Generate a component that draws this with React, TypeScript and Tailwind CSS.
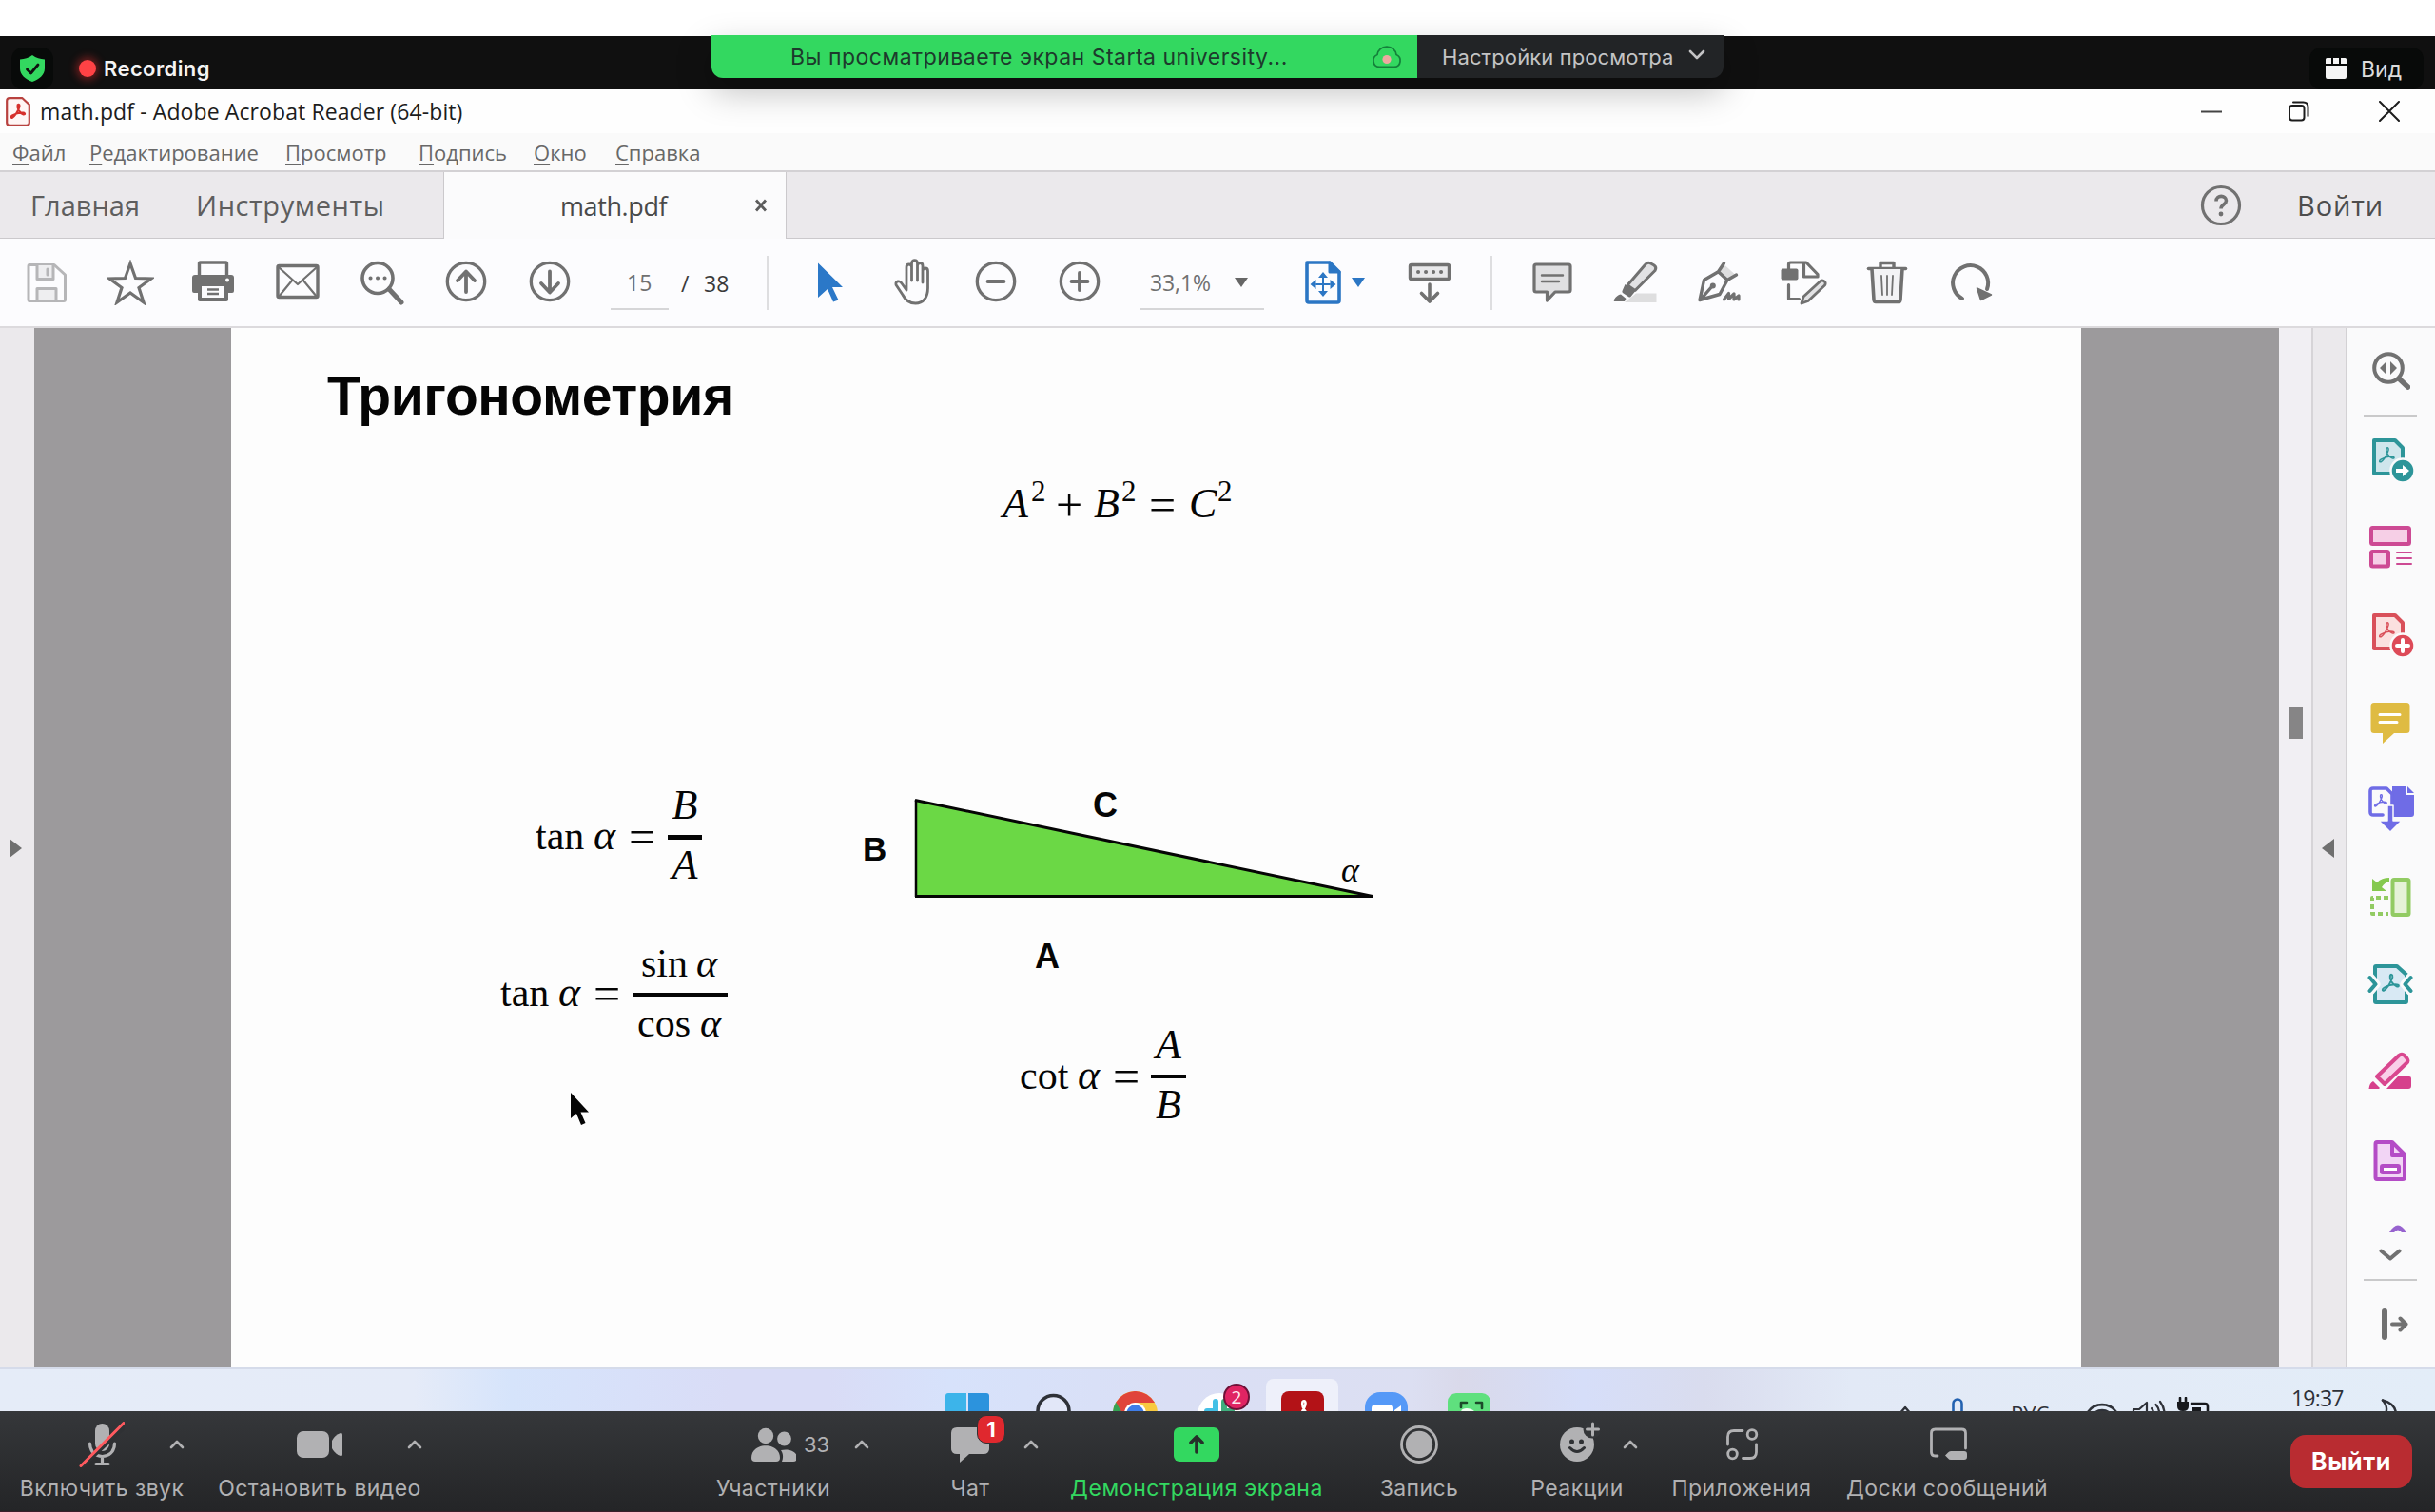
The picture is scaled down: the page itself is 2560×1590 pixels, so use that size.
import React from "react";

type P = { children?: React.ReactNode; className?: string };

function Ico({ children, className = "size-12", vb = "0 0 48 48" }: P & { vb?: string }) {
  return (
    <svg viewBox={vb} className={`block shrink-0 ${className}`} fill="none" strokeLinecap="round" strokeLinejoin="round">
      {children}
    </svg>
  );
}

const G = "#717171";

function Cell({ children, className = "w-[88px]" }: P) {
  return <div className={`flex h-full shrink-0 items-center justify-center ${className}`}>{children}</div>;
}

function ZoomHeader() {
  return (
    <div className="relative flex h-14 items-end justify-between bg-[#101010]">
      <div className="flex items-center">
        <div className="ml-3 flex h-11 w-11 items-center justify-center rounded-xl bg-[#080a09]">
          <Ico className="h-7 w-[26px]" vb="0 0 26 28">
            <path d="M13 0C17 3 21 4 26 4.500V14c0 7-6 11.500-13 14C6 25.500 0 21 0 14V4.500C5 4 9 3 13 0Z" fill="#33d860" />
            <path d="m7.500 15 4 4 7.500-9" stroke="#101010" strokeWidth="2.800" />
          </Ico>
        </div>
        <div className="ml-[27px] size-[18px] rounded-full bg-[#ff4245] shadow-[0_0_8px_3px_rgba(255,50,50,0.4)]" />
        <div className="ml-[8px] text-[22px] font-semibold leading-none tracking-[0.4px] text-[#f4f4f4]">Recording</div>
      </div>
      <div className="mr-3 flex h-11 w-[120px] items-center rounded-xl bg-[#080a09]">
        <Ico className="ml-[17px] h-[22px] w-[22px]" vb="0 0 22 22">
          <path d="M0 1.500Q0 0 1.500 0H6v6H0ZM8 0h6v6H8ZM16 0h4.500Q22 0 22 1.500V6h-6ZM0 8h22v12q0 2-2 2H2q-2 0-2-2Z" fill="#f5f5f5" />
        </Ico>
        <div className="ml-[15px] pt-0.5 text-[23px] leading-none text-[#dcdcdc]">Вид</div>
      </div>
      <div className="absolute -top-px left-[748px] z-10 flex h-[45px] w-[1064px] overflow-visible rounded-b-xl shadow-[0_14px_36px_rgba(0,0,0,0.25)]">
        <div className="flex w-[742px] items-center rounded-bl-xl bg-[#33d860]">
          <div className="ml-[83px] w-[611px] whitespace-nowrap pt-px text-[23px] leading-none tracking-[0.5px] text-[#1d3a2c]">
            Вы просматриваете экран Starta university...
          </div>
          <Ico className="h-6 w-8" vb="0 0 32 24">
            <path d="M8 22.500a6.800 6.800 0 0 1-2-13C6.500 5 10.500 1.200 16 1.200S25.500 5 26 9.500a6.800 6.800 0 0 1-2 13Z" stroke="#14803a" strokeWidth="1.800" />
            <circle cx="16" cy="14.500" r="4.600" fill="#eda9a0" />
          </Ico>
        </div>
        <div className="flex w-[322px] items-center rounded-br-xl bg-[#222426]">
          <div className="ml-[26px] w-[259px] whitespace-nowrap pt-px text-[22px] leading-none tracking-[0.1px] text-[#c4c4c5]">Настройки просмотра</div>
          <Ico className="mb-1 h-3 w-[18px]" vb="0 0 18 12">
            <path d="m2 2 7 7 7-7" stroke="#c4c4c5" strokeWidth="2.600" />
          </Ico>
        </div>
      </div>
    </div>
  );
}

function Swoosh({ c, w = 2 }: { c: string; w?: number }) {
  return (
    <path
      d="M9.500 1.500c2-2 3.500 1 1.500 5C9 11 5.500 17 2.500 18.500.500 19.200 0 17 2.500 15.500 7 13 13 11.500 17 12c3 .5 2 3-.5 2C12.500 12.500 8 6 9.500 1.500Z"
      stroke={c}
      strokeWidth={w}
    />
  );
}

function TitleBar() {
  return (
    <div className="flex h-[46px] items-center bg-[#fefefe]">
      <Ico className="ml-[6px] h-[31px] w-[26px]" vb="0 0 26 31">
        <path d="M4 1.200h13.500L24.800 8v19q0 2.800-2.800 2.800H4q-2.800 0-2.800-2.800V4Q1.200 1.200 4 1.200Z" stroke="#b8423f" strokeWidth="2.200" fill="#fff6f5" />
        <g transform="translate(5 7) scale(.8)">
          <Swoosh c="#d6302c" w={2.6} />
        </g>
      </Ico>
      <div className="ml-[10px] whitespace-nowrap text-[23px] leading-none tracking-[0.1px] text-[#1c1c1c]">
        math.pdf - Adobe Acrobat Reader (64-bit)
      </div>
      <Ico className="ml-auto mr-[70px] h-[3px] w-[22px]" vb="0 0 22 3">
        <path d="M0 1.500h22" stroke="#444" strokeWidth="2" />
      </Ico>
      <Ico className="mr-[73px] h-[22px] w-[22px]" vb="0 0 22 22">
        <rect x="1" y="5" width="15.500" height="15.500" rx="3" stroke="#1c1c1c" strokeWidth="2" />
        <path d="M5 1.500h10.500q5 0 5 5V16" stroke="#1c1c1c" strokeWidth="2" />
      </Ico>
      <Ico className="mr-[37px] h-[22px] w-[22px]" vb="0 0 22 22">
        <path d="m1 1 20 20M21 1 1 21" stroke="#1c1c1c" strokeWidth="2" />
      </Ico>
    </div>
  );
}

function MenuItem({ text, className }: { text: string; className: string }) {
  return (
    <div className={`whitespace-nowrap ${className}`}>
      <span className="underline decoration-[1.500px] underline-offset-[3px]">{text[0]}</span>
      {text.slice(1)}
    </div>
  );
}

function MenuBar() {
  return (
    <div className="flex h-[39px] items-center bg-[#fafafa] pl-[13px] text-[22px] leading-none text-[#686868]">
      <MenuItem text="Файл" className="w-[81px]" />
      <MenuItem text="Редактирование" className="w-[206px]" />
      <MenuItem text="Просмотр" className="w-[140px]" />
      <MenuItem text="Подпись" className="w-[121px]" />
      <MenuItem text="Окно" className="w-[86px]" />
      <MenuItem text="Справка" className="w-[100px]" />
    </div>
  );
}

function TabBar() {
  return (
    <div className="flex h-[72px] items-stretch border-t-2 border-[#d3d1d4] bg-[#ebe9ec] text-[29px] leading-none text-[#5e5e5e]">
      <div className="flex w-[467px] items-center border-b border-r border-[#cbc9cc] pl-[32px]">
        <div className="w-[174px]">Главная</div>
        <div className="tracking-[0.600px]">Инструменты</div>
      </div>
      <div className="flex w-[359px] items-center bg-[#fbfbfc] pl-[122px]">
        <div className="w-[204px] text-[27px] tracking-[-0.4px] text-[#4a4a4a]">math.pdf</div>
        <Ico className="h-[14px] w-[14px]" vb="0 0 14 14">
          <path d="m2 1.500 10 11M12 1.500l-10 11" stroke="#5c5c5c" strokeWidth="2.800" strokeLinecap="butt" />
        </Ico>
      </div>
      <div className="flex flex-1 items-center justify-end border-b border-l border-[#cbc9cc]">
        <Ico className="mr-[58px] h-11 w-11" vb="0 0 44 44">
          <circle cx="22" cy="22" r="19.500" stroke={G} strokeWidth="3.200" />
          <path d="M17 17.500c0-7 10.500-6.500 10.500-.5 0 4-5.500 4-5.500 8.500" stroke={G} strokeWidth="3.600" strokeLinecap="butt" />
          <circle cx="22" cy="31" r="2.400" fill={G} />
        </Ico>
        <div className="w-[145px] font-medium tracking-[0.9px] text-[#4d4d4d]">Войти</div>
      </div>
    </div>
  );
}

function ToolBar() {
  return (
    <div className="flex h-[94px] items-center border-b-2 border-[#dcdadd] bg-[#fcfcfe] pl-[5px] text-[23px] leading-none">
      <Cell>
        <Ico>
          <path d="M6 5.500h26L43.500 16v26q0 1.500-1.500 1.500H6Q5 43.500 5 42V7q0-1.500 1-1.500Z" stroke="#b6b6b8" strokeWidth="3" />
          <path d="M14 6v14.500h17V6M14 43V30.500h20V43" stroke="#b6b6b8" strokeWidth="3" fill="#eeeef0" />
          <path d="M25 10v6" stroke="#b6b6b8" strokeWidth="3" />
        </Ico>
      </Cell>
      <Cell>
        <Ico className="h-12 w-[50px]" vb="0 0 50 48">
          <path d="m25 4 5.500 15.500L47 20 34 29.500l5 15.500-14-10-14 10 5-15.500L3 20l16.500-.5Z" stroke={G} strokeWidth="3.200" strokeLinejoin="miter" />
        </Ico>
      </Cell>
      <Cell className="w-[86px]">
        <Ico>
          <path d="M9.500 17V4q0-1 1-1h27q1 0 1 1v13" stroke={G} strokeWidth="3.400" />
          <path d="M5 16h38q3 0 3 3v14q0 2-2 2h-4v7q0 2-2 2H10q-2 0-2-2v-7H4q-2 0-2-2V19q0-3 3-3Z" fill={G} />
          <circle cx="39" cy="21.500" r="2" fill="#fff" />
          <path d="M12 28h24v12H12Z" fill="#fcfcfe" />
          <path d="M18 31.500h12M18 36h12" stroke={G} strokeWidth="2.400" strokeLinecap="butt" />
        </Ico>
      </Cell>
      <Cell className="w-[91px]">
        <Ico>
          <rect x="3" y="6.500" width="42" height="33" rx="1.500" stroke={G} strokeWidth="3.400" />
          <path d="m4 8 20 18L44 8M4 39l14-17M44 39 30 22" stroke={G} strokeWidth="2.200" />
        </Ico>
      </Cell>
      <Cell>
        <Ico>
          <circle cx="19" cy="19.500" r="16" stroke={G} strokeWidth="3.600" />
          <path d="m31 31 13 14" stroke={G} strokeWidth="5" />
          <path d="M11.500 19.500h.1M19 19.500h.1M26.500 19.500h.1" stroke={G} strokeWidth="4" />
        </Ico>
      </Cell>
      <Cell>
        <Ico>
          <circle cx="24" cy="23" r="19.700" stroke={G} strokeWidth="3.300" />
          <path d="M24 34V14M15 22l9-9.500 9 9.500" stroke={G} strokeWidth="3.800" />
        </Ico>
      </Cell>
      <Cell>
        <Ico>
          <circle cx="24" cy="23" r="19.700" stroke={G} strokeWidth="3.300" />
          <path d="M24 12.500v20M15 25l9 9.500 9-9.500" stroke={G} strokeWidth="3.800" />
        </Ico>
      </Cell>
      <div className="ml-[20px] flex h-[57px] w-[61px] items-center border-b-2 border-[#d6d6d8] pl-[17px] pt-0.5 text-[#707070]">15</div>
      <div className="ml-[13px] w-6 pt-0.5 text-[#3a3a3a]">/</div>
      <div className="w-[66px] pt-0.5 text-[#3a3a3a]">38</div>
      <div className="mr-[21px] h-[57px] w-0.5 bg-[#dedee0]" />
      <Cell>
        <Ico>
          <path d="m11 3.500 26 25.500H26l6.500 13.500-5.500 2-6-13.500-10 9Z" fill="#2b78c8" />
        </Ico>
      </Cell>
      <Cell className="w-[86px]">
        <Ico className="h-[52px] w-[50px]" vb="0 0 50 52">
          <path
            d="M15 30V10c0-4 5.500-4 5.500 0V24 6c0-4.500 6-4.500 6 0v18V8.500c0-4 5.500-4 5.500 0V26 14c0-4 5.500-4 5.500 0v18c0 10-5 16-13 16-7 0-11-4-13.500-9L4 28.500c-1-4 4-5 6-1.500l5 7Z"
            transform="translate(3 0)"
            stroke={G}
            strokeWidth="2.800"
          />
        </Ico>
      </Cell>
      <Cell>
        <Ico>
          <circle cx="24" cy="23" r="19.700" stroke={G} strokeWidth="3.300" />
          <path d="M15.500 23h17" stroke={G} strokeWidth="3.800" />
        </Ico>
      </Cell>
      <Cell>
        <Ico>
          <circle cx="24" cy="23" r="19.700" stroke={G} strokeWidth="3.300" />
          <path d="M15.500 23h17M24 14v18" stroke={G} strokeWidth="3.800" />
        </Ico>
      </Cell>
      <div className="ml-[20px] flex h-[57px] w-[130px] items-center border-b-2 border-[#d6d6d8] pl-[10px] pt-0.5 tracking-[-0.1px] text-[#707070]">
        <div className="w-[89px]">33,1%</div>
        <Ico className="h-[10px] w-[14px]" vb="0 0 14 10">
          <path d="M0 0h14L7 10Z" fill="#666" />
        </Ico>
      </div>
      <Ico className="ml-[38px] h-12 w-12">
        <path d="M7 3h24l10 10v30q0 2-2 2H9q-2 0-2-2V5q0-2 2-2Z" stroke="#2b76c4" strokeWidth="3.600" />
        <path d="M31 3v10h10" stroke="#2b76c4" strokeWidth="3" fill="#2b76c4" />
        <path d="M24 19v14M17 26h14" stroke="#2b76c4" strokeWidth="2" />
        <path d="m24 13 5 6H19ZM24 39l5-6H19ZM10.500 26l6-5v10ZM37.500 26l-6-5v10Z" fill="#2b76c4" />
      </Ico>
      <Ico className="ml-[6px] h-[10px] w-[14px]" vb="0 0 14 10">
        <path d="M0 0h14L7 10Z" fill="#2b76c4" />
      </Ico>
      <Ico className="ml-[44px] h-12 w-12">
        <rect x="3.500" y="5.500" width="41" height="15" rx="1.500" stroke={G} strokeWidth="3.400" fill="#e8e8ea" />
        <path d="M12 13h.1M20 13h.1M28 13h.1M36 13h.1" stroke={G} strokeWidth="4" />
        <path d="M24 26v17M15.500 35.500 24 44l8.500-8.500" stroke={G} strokeWidth="3.600" />
      </Ico>
      <div className="ml-[40px] mr-[19px] h-[57px] w-0.5 bg-[#dedee0]" />
      <Cell>
        <Ico>
          <path d="M7 5h34q2 0 2 2v25q0 2-2 2H27l-8.500 9V34H7q-2 0-2-2V7q0-2 2-2Z" stroke={G} strokeWidth="3.200" fill="#e0e0e2" />
          <path d="M13 16.500h22M13 23h18" stroke={G} strokeWidth="2.400" />
        </Ico>
      </Cell>
      <Cell>
        <Ico>
          <path d="M12 45 24 35.500H45.500V45Z" fill="#dededf" />
          <path d="M33.500 5.500q2.500-3.500 6-1.500l3.500 2q3 2 1 5.500L23 32.500l-8-5.500Z" stroke={G} strokeWidth="3" fill="#e2e2e4" />
          <path d="m12.500 26 10.500 7.500-4.500 5.500q-1 1-2.500 0l-6-4q-1-1-.5-2ZM8 36.500l5.500 4.500-1.500 3H2Q0 44 1 42q3-5 7-5.500Z" fill={G} />
        </Ico>
      </Cell>
      <Cell>
        <Ico>
          <path d="m28.500 5 12 11-7.500 5-10.500-8.500Z" fill="#dededf" />
          <path d="m28.500 3.700-6 9L7.500 21.500 3 42.500l21-6L32 21.500l9.500-5.500M22.500 12.700 32 21.500M4 42l12.500-14.500" stroke={G} strokeWidth="3.400" />
          <circle cx="16.800" cy="27.500" r="3" fill={G} />
          <path d="m28.500 42 5-6.500v6l5.500-5.500v6l5-4v4" stroke={G} strokeWidth="3.200" />
        </Ico>
      </Cell>
      <Cell>
        <Ico className="h-12 w-[50px]" vb="0 0 50 48">
          <path d="M9.500 11V5q0-2 2-2H28l12 12.500V18H25.500V4M9.500 26.500v15h11" stroke={G} strokeWidth="3.200" />
          <rect x="1.500" y="9.500" width="18" height="12" rx="2" fill={G} />
          <path d="M43 22.500q3-1.500 5 1.500.5 1.500-.5 3L30 43.500l-7 2.500 2-7Z" stroke={G} strokeWidth="2.800" fill="#e2e2e4" />
        </Ico>
      </Cell>
      <Cell>
        <Ico>
          <path d="M17 9V3.500h14V9" stroke={G} strokeWidth="3.400" />
          <path d="M4.500 9.500h39" stroke={G} strokeWidth="3.600" />
          <path d="M8 10 10 42q.2 2.500 2 2.500h24q1.800 0 2-2.500l2-32" stroke={G} strokeWidth="3.600" fill="#f3f3f5" />
          <path d="m18 17 1 20M24 17v20M30 17l-1 20" stroke={G} strokeWidth="1.800" />
        </Ico>
      </Cell>
      <Cell>
        <Ico>
          <path d="M15 41A18.500 18.500 0 1 1 41 31" stroke={G} strokeWidth="4" />
          <path d="m30.500 30 15 7-11 5.500Z" fill={G} stroke={G} strokeWidth="1.500" />
        </Ico>
      </Cell>
    </div>
  );
}

function Lhs({ fn }: { fn: string }) {
  return (
    <>
      <span className="w-[61px] text-[42px] leading-[42px]">{fn}</span>
      <span className="w-[37px] text-[44px] italic leading-[42px]">α</span>
      <span className="relative top-1 w-[41px] text-[50px] leading-[42px]">=</span>
    </>
  );
}

function PdfPage() {
  return (
    <div className="relative w-[1945px] shrink-0 overflow-hidden bg-[#fdfdfd] text-[#050505] [font-family:'Liberation_Serif',serif]">
      <h1 className="absolute left-[101px] top-[43px] whitespace-nowrap text-[57px] font-bold leading-none tracking-[-0.400px] [font-family:'Liberation_Sans',sans-serif]">
        Тригонометрия
      </h1>

      <div className="absolute left-[811px] top-[160px] flex items-baseline text-[44px] leading-[44px]">
        <i className="w-[30px]">A</i>
        <span className="relative -top-[17px] w-[26px] text-[31px]">2</span>
        <span className="relative top-[4px] w-[40px] text-[50px]">+</span>
        <i className="w-[29px]">B</i>
        <span className="relative -top-[17px] w-[29px] text-[31px]">2</span>
        <span className="relative top-[4px] w-[42px] text-[50px]">=</span>
        <i className="w-[30px]">C</i>
        <span className="relative -top-[17px] text-[31px]">2</span>
      </div>

      <div className="absolute left-[320px] top-[480px] flex items-start">
        <div className="mt-[30px] flex items-baseline">
          <Lhs fn="tan" />
        </div>
        <div className="flex w-[36px] flex-col items-center text-[44px] italic leading-[44px]">
          <span>B</span>
          <span className="mb-[5px] mt-[9px] h-[5px] w-full bg-[#050505]" />
          <span>A</span>
        </div>
      </div>

      <div className="absolute left-[283px] top-[647px] flex items-start">
        <div className="mt-[28px] flex items-baseline">
          <Lhs fn="tan" />
        </div>
        <div className="flex w-[100px] flex-col text-[42px] leading-[42px]">
          <span className="flex pl-[9px]">
            <span className="w-[58px]">sin</span>
            <i>α</i>
          </span>
          <span className="mb-[7px] mt-[10px] h-[4px] w-full bg-[#050505]" />
          <span className="flex pl-[5px]">
            <span className="w-[66px]">cos</span>
            <i>α</i>
          </span>
        </div>
      </div>

      <div className="absolute left-[829px] top-[732px] flex items-start">
        <div className="mt-[30px] flex items-baseline">
          <Lhs fn="cot" />
        </div>
        <div className="-ml-px flex w-[37px] flex-col items-center text-[44px] italic leading-[44px]">
          <span>A</span>
          <span className="mb-[6px] mt-[9px] h-[4px] w-full bg-[#050505]" />
          <span>B</span>
        </div>
      </div>

      <svg viewBox="0 0 490 112" className="absolute left-[715px] top-[491px] h-[112px] w-[490px]">
        <path d="M5 5.500V106H485Z" fill="#6bd845" />
        <path d="M5 5v102" stroke="#050505" strokeWidth="2.500" />
        <path d="M4 5.500 485 106.500H4" stroke="#050505" strokeWidth="3" fill="none" />
      </svg>
      <div className="absolute left-[664px] top-[530px] text-[35px] font-bold leading-none [font-family:'Liberation_Sans',sans-serif]">B</div>
      <div className="absolute left-[906px] top-[484px] text-[36px] font-bold leading-none [font-family:'Liberation_Sans',sans-serif]">C</div>
      <div className="absolute left-[845px] top-[643px] text-[36px] font-bold leading-none [font-family:'Liberation_Sans',sans-serif]">A</div>
      <div className="absolute left-[1167px] top-[552px] text-[36px] italic leading-none">α</div>

      <svg viewBox="0 0 22 36" className="absolute left-[356px] top-[803px] h-9 w-[22px]">
        <path d="M1 1v27l6-5 5 12 4.500-2-5-11.500H20Z" fill="#050505" />
      </svg>
    </div>
  );
}

function SideTools() {
  return (
    <div className="flex flex-1 flex-col items-center bg-[#fafafb] pr-0.5">
      <Ico className="ml-0.5 mt-[25px] h-10 w-10" vb="0 0 40 40">
        <circle cx="17" cy="17" r="14.800" stroke={G} strokeWidth="4" />
        <path d="m29 29 8.500 8" stroke={G} strokeWidth="5.500" />
        <path d="M15 10v14l-7-7ZM19 10v14l7-7Z" fill={G} />
      </Ico>
      <div className="mt-[26px] h-0.5 w-14 bg-[#c9c9ca]" />
      <Ico className="ml-[5px] mt-[23px] h-[47px] w-[46px]" vb="0 0 46 47">
        <path d="M3 2h22l8 8v27H3Z" stroke="#2d9599" strokeWidth="4" fill="#cfe6ec" />
        <g transform="translate(8 9) scale(.85)"><Swoosh c="#2d9599" w={1.8} /></g>
        <circle cx="33" cy="34" r="12.500" fill="#2d9599" stroke="#fafafb" strokeWidth="2.500" />
        <path d="M26 32h7v-4l7 6-7 6v-4h-7Z" fill="#fff" />
      </Ico>
      <Ico className="mt-[45px] h-[45px] w-[46px]" vb="0 0 46 45">
        <rect x="3" y="2" width="40" height="17" rx="1.500" stroke="#cd4a94" strokeWidth="4" fill="#f6cfe6" />
        <rect x="3" y="27" width="18" height="15.500" rx="1.500" stroke="#cd4a94" strokeWidth="4" fill="#f6cfe6" />
        <path d="M30 28h15M30 34h15M30 40h15" stroke="#cd4a94" strokeWidth="2" />
      </Ico>
      <Ico className="ml-[5px] mt-[47px] h-[47px] w-[46px]" vb="0 0 46 47">
        <path d="M3 2h22l8 8v27H3Z" stroke="#d9505a" strokeWidth="4" fill="#fbe0df" />
        <g transform="translate(8 9) scale(.85)"><Swoosh c="#d9505a" w={1.8} /></g>
        <circle cx="33" cy="34" r="12.500" fill="#dd4a58" stroke="#fafafb" strokeWidth="2.500" />
        <path d="M33 28v12M27 34h12" stroke="#fff" strokeWidth="4" />
      </Ico>
      <Ico className="mt-[47px] h-[43px] w-[42px]" vb="0 0 42 43">
        <path d="M4 0h34q3.500 0 3.500 3.500v25q0 3.500-3.500 3.500H25L13 43V32H4Q.5 32 .5 28.500v-25Q.5 0 4 0Z" fill="#dfbb42" />
        <path d="M10 12.500h21M10 20.500h18" stroke="#fff" strokeWidth="3" />
      </Ico>
      <Ico className="ml-[1px] mt-[45px] h-12 w-12">
        <path d="M25 0h14v9h9v20q0 3-3 3H25Z" fill="#6f6ce6" />
        <path d="M41 0l7 7h-7Z" fill="#6f6ce6" />
        <path d="M15 30H5q-3 0-3-3V5q0-3 3-3h14l6 6v14" stroke="#6f6ce6" strokeWidth="3.600" fill="#fafafb" />
        <g transform="translate(6 8) scale(.7)"><Swoosh c="#6f6ce6" w={2} /></g>
        <path d="M20 20h6v16h9L23 48 11 36h9Z" fill="#6f6ce6" stroke="#fafafb" strokeWidth="1.500" />
      </Ico>
      <Ico className="mt-[47px] h-[43px] w-[44px]" vb="0 0 44 43">
        <rect x="24.500" y="3" width="17" height="37" rx="1.500" stroke="#92cb63" strokeWidth="4" fill="#e5f2d8" />
        <path d="M20 22H3v17h17" stroke="#92cb63" strokeWidth="4" strokeDasharray="5 3" strokeLinecap="butt" />
        <path d="M3 2v13h15l-5-4q3-5 8-6V1q-8 0-13 5Z" fill="#85c94f" />
      </Ico>
      <Ico className="mt-[49px] h-[42px] w-12" vb="0 0 48 42">
        <path d="M9 2h22l10 9v28q0 1-1 1H9q-1 0-1-1V3q0-1 1-1Z" stroke="#2d9599" strokeWidth="4" fill="#d8e9f4" />
        <path d="m2.500 14 6 7-6 7M45.500 14l-6 7 6 7" stroke="#fafafb" strokeWidth="10" />
        <path d="m2.500 14 6 7-6 7M45.500 14l-6 7 6 7" stroke="#2d9599" strokeWidth="4" />
        <g transform="translate(15 10) scale(.95)"><Swoosh c="#2d9599" w={2} /></g>
      </Ico>
      <Ico className="mt-[50px] h-[41px] w-[46px]" vb="0 0 46 41">
        <path d="m32 4 q3-2.500 6 0 l2.500 3 q2 3-.5 5L17 34l-8-8Z" stroke="#d9478f" strokeWidth="4" fill="#f9cfe8" />
        <path d="M31 26h12q2 0 2 2v8q0 3-3 3H19ZM5 31l7 7-1 1H.5q.5-6 4.500-8Z" fill="#d6408c" />
      </Ico>
      <Ico className="mt-[52px] h-[43px] w-[36px]" vb="0 0 36 43">
        <path d="M4 2h16l13 13v24q0 2-2 2H4q-1.500 0-1.500-2V4Q2.500 2 4 2Z" stroke="#b44cc6" strokeWidth="4" fill="#f2d5f5" />
        <path d="M20 3v13h13" stroke="#b44cc6" strokeWidth="4" />
        <rect x="9" y="27" width="18" height="7" rx="1" stroke="#b44cc6" strokeWidth="4" fill="#fff" />
      </Ico>
      <Ico className="ml-[16px] mt-[46px] h-[8px] w-[18px]" vb="0 0 18 8">
        <path d="M0 8Q9-7 18 8h-5Q9 3 5 8Z" fill="#9763cf" />
      </Ico>
      <Ico className="mt-[17px] h-[14px] w-6" vb="0 0 24 14">
        <path d="m2.500 2.500 9.500 8 9.500-8" stroke={G} strokeWidth="4" />
      </Ico>
      <div className="mt-[18px] h-0.5 w-14 bg-[#c9c9ca]" />
      <Ico className="ml-[10px] mt-[29px] h-[33px] w-[28px]" vb="0 0 28 33">
        <path d="M3 3v27" stroke={G} strokeWidth="6" />
        <path d="M11 16.500h14M19.500 10.500l6 6-6 6" stroke={G} strokeWidth="4" />
      </Ico>
    </div>
  );
}

function Viewer() {
  return (
    <div className="flex h-[1093px]">
      <div className="flex w-9 items-center bg-[#ebe9ec]">
        <Ico className="ml-[10px] h-5 w-[13px]" vb="0 0 13 20">
          <path d="m0 0 13 10L0 20Z" fill="#6f6f6f" />
        </Ico>
      </div>
      <div className="w-[207px] bg-[#9c9a9c]" />
      <PdfPage />
      <div className="w-[208px] bg-[#9c9a9c]" />
      <div className="flex w-[36px] justify-center border-r-2 border-[#d6d4d7] bg-[#f1eff3]">
        <div className="mt-[398px] h-[34px] w-[15px] bg-[#868586]" />
      </div>
      <div className="flex w-9 items-center border-r-2 border-[#d3d1d4] bg-[#ebe9ec]">
        <Ico className="ml-[9px] h-5 w-[13px]" vb="0 0 13 20">
          <path d="M13 0 0 10l13 10Z" fill="#6f6f6f" />
        </Ico>
      </div>
      <SideTools />
    </div>
  );
}

function TaskBar() {
  return (
    <div className="flex h-[46px] items-start overflow-hidden border-t-2 border-[#d5dbea] bg-[linear-gradient(90deg,#e5ecf8_0%,#e5ebf8_17%,#d6e4fb_21%,#d8e0f9_26%,#d9dcf6_30%,#d9dcf6_34%,#d7e2fb_39%,#dadff5_48%,#dcdff2_58%,#d9d9ea_60%,#d6def9_65%,#d9dcee_70%,#e2e9f6_76%,#e3edf8_100%)]">
      <Ico className="ml-[994px] mt-[25px] h-[46px] w-[46px]" vb="0 0 46 46">
        <path d="M3 0h19v22H0V3Q0 0 3 0Z" fill="#3cb4ea" />
        <path d="M24 0h19q3 0 3 3v19H24Z" fill="#2c93dd" />
      </Ico>
      <Ico className="ml-[49px] mt-[25px] h-[38px] w-[37px]" vb="0 0 37 38">
        <circle cx="18.500" cy="19" r="16.500" stroke="#2e3138" strokeWidth="3.600" fill="#e2e7f8" />
      </Ico>
      <Ico className="ml-[44px] mt-[23px] h-[47px] w-[47px]" vb="0 0 47 47">
        <circle cx="23.500" cy="23.500" r="23.500" fill="#f8c93f" />
        <path d="M3 12A23.500 23.500 0 0 1 44 12H23.500L13 29Z" fill="#e0443a" />
        <path d="M3.200 11.500 14 30 24 47A23.500 23.500 0 0 1 3.200 11.500Z" fill="#35a353" />
        <circle cx="23.500" cy="23.500" r="11.500" fill="#fff" />
        <circle cx="23.500" cy="23.500" r="9.200" fill="#3f7de8" />
      </Ico>
      <div className="relative ml-[42px] mt-[25px]">
        <Ico className="h-[46px] w-[46px]" vb="0 0 46 46">
          <circle cx="23" cy="23" r="23" fill="#fff" />
          <path d="M19 9v14M10 19h9" stroke="#43c0e6" strokeWidth="6" />
          <path d="M28 9v14M28 19h8" stroke="#3fae7d" strokeWidth="6" />
        </Ico>
        <div className="absolute -top-[10px] left-[27px] flex size-7 items-center justify-center rounded-full border-2 border-[#6e1238] bg-[#e02463] text-[19px] leading-none text-[#ffe9f0]">
          2
        </div>
      </div>
      <div className="ml-[26px] mt-[10px] flex h-[60px] w-[76px] justify-center rounded-lg bg-[#eef0fa] pt-[13px]">
        <div className="flex h-[46px] w-[45px] justify-center rounded-lg bg-[#b31217]">
          <Ico className="mt-2 h-[26px] w-[26px]" vb="-2 -1 22 22">
            <Swoosh c="#fff" w={2.2} />
          </Ico>
        </div>
      </div>
      <div className="ml-[28px] mt-[24px] flex h-[46px] w-[45px] justify-center rounded-[16px] bg-[#5599f7] pt-[13px]">
        <div className="h-5 w-[22px] rounded-sm bg-white" />
        <Ico className="ml-0.5 h-5 w-[7px]" vb="0 0 7 20">
          <path d="M0 6 7 1v18l-7-5Z" fill="#fff" />
        </Ico>
      </div>
      <Ico className="ml-[42px] mt-[25px] h-[46px] w-[45px]" vb="0 0 45 46">
        <rect width="45" height="46" rx="9" fill="#5fe07e" />
        <path d="M14 15v-5h6M30 10h6v6" stroke="#1c4a2a" strokeWidth="2.600" />
        <path d="M14 20c0-5 10-5 14-1s7 2 8 5H14Z" fill="#f2fff4" />
      </Ico>
      <Ico className="ml-[428px] mt-[38px] h-[10px] w-[16px]" vb="0 0 16 10">
        <path d="m2 9 6-7 6 7" stroke="#2e3138" strokeWidth="2.400" />
      </Ico>
      <Ico className="ml-[41px] mt-[30px] h-[32px] w-[12px]" vb="0 0 12 32">
        <rect x="1.500" y="1.500" width="9" height="26" rx="4.500" stroke="#2261b0" strokeWidth="2.600" />
      </Ico>
      <div className="ml-[50px] mt-[35px] w-[79px] text-[22px] leading-none tracking-[-0.2px] text-[#2e3138]">РУС</div>
      <Ico className="mt-[34px] h-[24px] w-[34px]" vb="0 0 34 24">
        <path d="M1.500 12a18 18 0 0 1 31 0M7 14.500a12 12 0 0 1 20 0" stroke="#2e3138" strokeWidth="2.600" />
      </Ico>
      <Ico className="ml-[14px] mt-[32px] h-[28px] w-[36px]" vb="0 0 36 28">
        <path d="M2 10h6l8-7v22l-8-7H2ZM21 9q4 5 0 10M25.500 5q7 8 0 18M30 2q9 12 0 25" stroke="#2e3138" strokeWidth="2.200" />
      </Ico>
      <Ico className="ml-[12px] mt-[29px] h-[28px] w-[36px]" vb="0 0 36 28">
        <path d="M3 1v5M9 1v5" stroke="#17191d" strokeWidth="2.600" />
        <path d="M0 5h12v5q0 5-6 5t-6-5Z" fill="#17191d" />
        <path d="M15 7h14q3 0 3 3v12H8" stroke="#17191d" strokeWidth="2.600" />
        <path d="M16 11h9v12h-9Z" fill="#17191d" />
      </Ico>
      <div className="ml-[84px] mt-[19px] w-[94px] text-[23px] leading-none tracking-[-0.8px] text-[#2e3138]">19:37</div>
      <Ico className="mt-[31px] h-[26px] w-[20px]" vb="0 0 20 26">
        <path d="M2 1.500q16 4 14 20" stroke="#2e3138" strokeWidth="2.400" />
        <path d="M2 1.500q7 8 2 16" stroke="#2e3138" strokeWidth="2.400" />
      </Ico>
    </div>
  );
}

const Z = "#b1b1b3";

function Chevron({ className }: { className: string }) {
  return (
    <Ico className={`h-[10px] w-4 ${className}`} vb="0 0 16 10">
      <path d="m2 8 6-6 6 6" stroke={Z} strokeWidth="2.600" />
    </Ico>
  );
}

function ZoomItem({
  icon,
  label,
  after,
  className,
  labelClass = "text-[#b1b1b3] tracking-[0.400px]",
}: {
  icon: React.ReactNode;
  label: string;
  after?: React.ReactNode;
  className: string;
  labelClass?: string;
}) {
  return (
    <div className={`flex shrink-0 flex-col ${className}`}>
      <div className="mt-[11px] grid h-12 grid-cols-[1fr_48px_1fr] items-center">
        <span />
        {icon}
        <div className="flex items-center">{after}</div>
      </div>
      <div className={`mt-[11px] whitespace-nowrap text-center text-[23px] leading-none ${labelClass}`}>{label}</div>
    </div>
  );
}

function ZoomBar() {
  return (
    <div className="flex h-[106px] border-b border-[#3a1f2b] bg-gradient-to-b from-[#35373a] to-[#242527]">
      <ZoomItem
        className="w-[214px]"
        label="Включить звук"
        after={<Chevron className="ml-[47px]" />}
        icon={
          <Ico>
            <rect x="17" y="2" width="15" height="29" rx="7.500" fill={Z} />
            <path d="M11.500 23c0 18 26 18 26 0M24.500 37v7M18 44.500h13" stroke={Z} strokeWidth="3.200" />
            <path d="M4 46 50 3" stroke="#2f3134" strokeWidth="5" />
            <path d="M2 46.500 47 1.500" stroke="#ff5a5f" strokeWidth="3" />
          </Ico>
        }
      />
      <ZoomItem
        className="w-[244px]"
        label="Остановить видео"
        after={<Chevron className="ml-[68px]" />}
        icon={
          <Ico>
            <rect x="0" y="10" width="34" height="28" rx="7" fill={Z} />
            <path d="M37 20q3-6 9-8 2-.5 2 1.500v21q0 2-2 1.500-6-2-9-8Z" fill={Z} />
          </Ico>
        }
      />
      <ZoomItem
        className="ml-[232px] w-[246px]"
        label="Участники"
        after={
          <>
            <span className="ml-2 w-[53px] text-[22px] leading-none text-[#b1b1b3]">33</span>
            <Chevron className="" />
          </>
        }
        icon={
          <Ico>
            <circle cx="16" cy="15" r="8.200" fill={Z} />
            <circle cx="35.500" cy="18" r="7.400" fill={Z} />
            <path d="M1 38c0-17 30-17 30 0q0 4-4 4H5q-4 0-4-4Z" fill={Z} />
            <path d="M33 42c2-5 1-9-1-12 8-2 17 1 17 8q0 4-4 4Z" fill={Z} />
          </Ico>
        }
      />
      <ZoomItem
        className="w-[168px]"
        label="Чат"
        after={<Chevron className="ml-[32px]" />}
        icon={
          <div className="relative">
            <Ico>
              <path d="M10 6h28q6 0 6 6v16q0 6-6 6H23l-10 9v-9h-3q-6 0-6-6V12q0-6 6-6Z" fill={Z} />
            </Ico>
            <div className="absolute -top-[7px] left-[31px] flex h-[30px] w-[30px] items-center justify-center rounded-[10px] border border-[#303235] bg-[#e0282e] text-[22px] font-bold leading-none text-white">
              1
            </div>
          </div>
        }
      />
      <ZoomItem
        className="w-[308px]"
        label="Демонстрация экрана"
        labelClass="text-[#33d860] tracking-[0.600px]"
        icon={
          <Ico>
            <rect x="0" y="6" width="48" height="36" rx="6" fill="#33d860" />
            <path d="M24 32V17M18 22l6-6 6 6" stroke="#26302a" strokeWidth="3.600" />
          </Ico>
        }
      />
      <ZoomItem
        className="w-[160px]"
        label="Запись"
        icon={
          <Ico>
            <circle cx="24" cy="24" r="18.500" stroke={Z} strokeWidth="2.800" />
            <circle cx="24" cy="24" r="14.200" fill={Z} />
          </Ico>
        }
      />
      <ZoomItem
        className="w-[172px]"
        label="Реакции"
        after={<Chevron className="ml-[24px]" />}
        icon={
          <Ico>
            <circle cx="24" cy="24" r="18" fill={Z} />
            <circle cx="40" cy="8" r="9.500" fill="#343639" />
            <path d="M40.500 2v12M34.500 8h12" stroke={Z} strokeWidth="3" />
            <circle cx="18.500" cy="21" r="2.500" fill="#2f3134" />
            <circle cx="28.500" cy="21" r="2.500" fill="#2f3134" />
            <path d="M16.500 27.500q7.500 8 15 0" stroke="#2f3134" strokeWidth="3" />
          </Ico>
        }
      />
      <ZoomItem
        className="w-[174px]"
        label="Приложения"
        icon={
          <Ico>
            <path d="M9.500 24V16q0-6.500 6.500-6.500h9M25.500 38.500H33q6.500 0 6.500-6.500v-8" stroke={Z} strokeWidth="2.800" />
            <circle cx="35" cy="13.500" r="4.800" stroke={Z} strokeWidth="2.800" />
            <circle cx="14.500" cy="34" r="4.800" stroke={Z} strokeWidth="2.800" />
          </Ico>
        }
      />
      <ZoomItem
        className="w-[258px]"
        label="Доски сообщений"
        icon={
          <Ico>
            <path d="M14 36H11.500q-4 0-4-4V12q0-4 4-4h28q4 0 4 4v16" stroke={Z} strokeWidth="2.800" />
            <path d="M25 32.500q1-1.500 3-1.500h14q3 0 3 3v3q0 3-3 3H28q-2 0-3-1.500l-3-3Z" fill={Z} />
          </Ico>
        }
      />
      <div className="ml-auto mr-6 mt-[25px] flex h-14 w-32 items-center justify-center rounded-[16px] bg-[#b92c31] text-[25px] font-bold leading-none tracking-[0.600px] text-white">
        Выйти
      </div>
    </div>
  );
}

export default function App() {
  return (
    <div className="flex h-[1590px] w-[2560px] flex-col overflow-hidden bg-white pt-[38px] [font-family:Inter,sans-serif]">
      <ZoomHeader />
      <div className="flex flex-col [font-family:'Open_Sans',sans-serif]">
        <TitleBar />
        <MenuBar />
        <TabBar />
        <ToolBar />
        <Viewer />
        <TaskBar />
      </div>
      <ZoomBar />
    </div>
  );
}
